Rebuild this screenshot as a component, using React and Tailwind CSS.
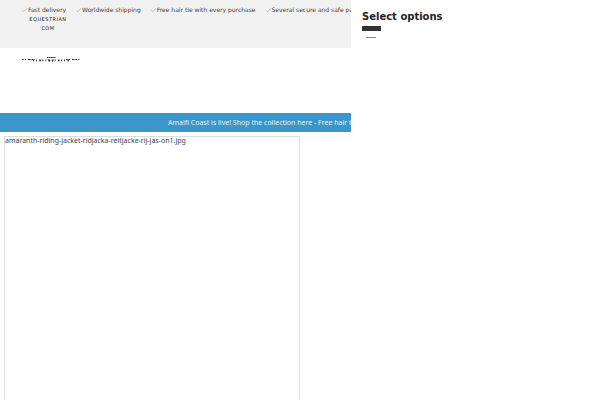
const benefits = [
  'Fast delivery',
  'Worldwide shipping',
  'Free hair tie with every purchase',
  'Several secure and safe payments',
];

function Check() {
  return (
    <svg viewBox="0 0 6 6" className="size-[6px] shrink-0" fill="none" stroke="#b0b0b0" aria-hidden="true">
      <path d="M.5 3.5 1.7 4.6 4.8 1.6" strokeWidth=".8" />
    </svg>
  );
}

function Logo() {
  return (
    <svg viewBox="0 0 60 8" className="h-2 w-[60px]" fill="none" stroke="#222" role="img" aria-label="Equestrian">
      <path d="M1 3.5h13M45 3.5h14" strokeWidth="1.2" strokeDasharray="1.6 1.4 1 2 2.4 1" />
      <path d="M12 4.4h36" strokeWidth="1.8" strokeDasharray="1 2 .8 2.4 1.6 1.6" />
      <path d="M26 1.5h9" strokeWidth="1.2" strokeDasharray="1.5 .6" />
      <path d="m27 3 1.5 3M33 3l-1.5 3" strokeWidth=".6" />
    </svg>
  );
}

export default function App() {
  return (
    <div className="flex h-screen overflow-hidden bg-white font-['DejaVu_Sans',sans-serif] text-[#444]">
      <main className="min-w-0 flex-1 overflow-hidden">
        <header>
          <div className="h-12 bg-[#f1f1f1] px-[22px] pt-[5px] text-[6px] leading-[10px]">
            <ul className="flex gap-[10px] whitespace-nowrap">
              {benefits.map((text) => (
                <li key={text} className="flex items-center">
                  <Check />
                  {text}
                </li>
              ))}
            </ul>
            <p className="w-[52px] text-center text-[5px] leading-[9px] tracking-widest text-[#222]">
              EQUESTRIAN
              <br />
              COM
            </p>
          </div>
          <div className="h-[65px] px-[21px] pt-2">
            <Logo />
          </div>
        </header>
        <p className="bg-[#3c96c8] pl-[168px] font-['Noto_Sans','Open_Sans',sans-serif] text-[7px] leading-[19px] whitespace-nowrap text-[#e4f1f8]">
          Amalfi Coast is live! Shop the collection here - Free hair tie with every purchase
        </p>
        <div className="mt-1 ml-1 h-[280px] w-[296px] border border-[#ddd] font-['Noto_Sans','Open_Sans',sans-serif] text-[7px] leading-[8px]">
          amaranth-riding-jacket-ridjacka-reitjacke-rij-jas-on1.jpg
        </div>
      </main>
      <aside className="w-[249px] shrink-0 bg-white px-[11px] pt-[9px]">
        <h2 className="pt-px text-[10px] leading-[14px] font-bold text-[#222]">Select options</h2>
        <div className="mt-[2px] h-[5px] w-[19px] bg-[#333]" />
        <div className="mt-[6px] ml-1 h-px w-[10px] bg-[#888]" />
      </aside>
    </div>
  );
}
